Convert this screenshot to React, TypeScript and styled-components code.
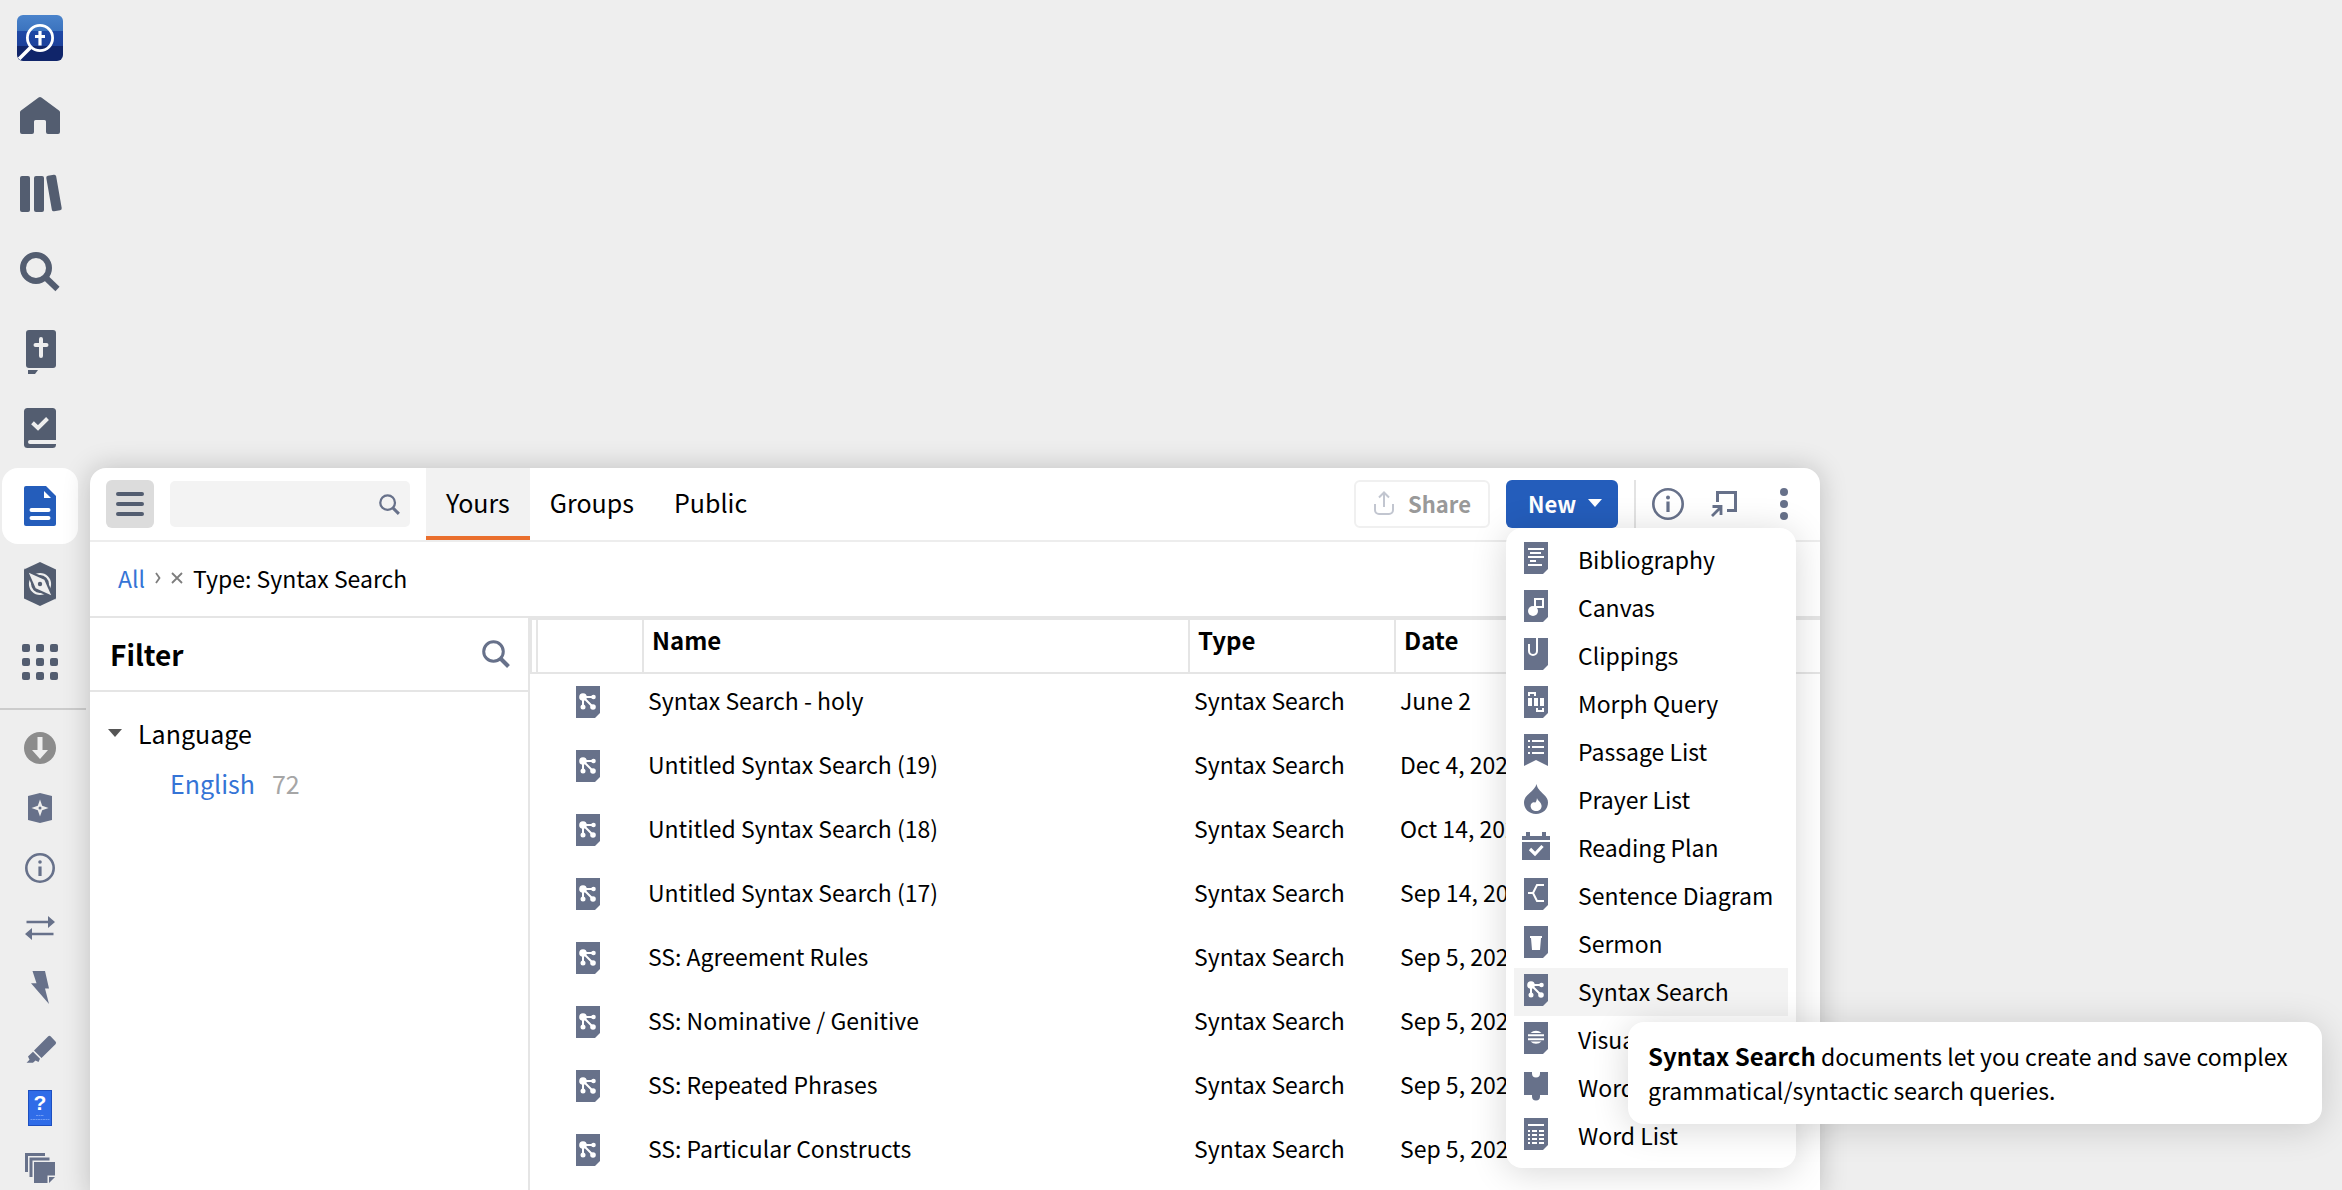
import React from "react";
import styled, { createGlobalStyle } from "styled-components";

const ink = "#535d70";
const slate = "#67718a";
const blue = "#245dbb";

const GlobalStyle = createGlobalStyle`
  *, *::before, *::after { box-sizing: border-box; }
  body {
    margin: 0;
    background: #eeeeee;
    color: #000;
    font-family: "Noto Sans CJK SC", "Noto Sans", sans-serif;
    font-size: 23px;
    line-height: 32px;
  }
  button, input { font: inherit; color: inherit; margin: 0; border: 0; padding: 0; background: none; }
  button { cursor: pointer; }
  a { text-decoration: none; }
  ul { list-style: none; margin: 0; padding: 0; }
  h2 { margin: 0; }
  svg { display: block; flex: none; }
`;

/* ---------- layout ---------- */

const Desktop = styled.div`
  display: grid;
  grid-template-columns: 90px minmax(0, 1730fr) minmax(0, 522fr);
  height: 100vh;
  overflow: hidden;
`;

const Sidebar = styled.nav`
  display: flex;
  flex-direction: column;
  align-items: flex-start;
`;

const AppGroup = styled.div`
  display: flex;
  flex-direction: column;
  gap: 2px;
  padding: 0 2px;
`;

const AppButton = styled.button<{ $active?: boolean }>`
  display: flex;
  align-items: center;
  justify-content: center;
  width: 76px;
  height: 76px;
  border-radius: 16px;
  color: ${(p) => (p.$active ? blue : ink)};
  background: ${(p) => (p.$active ? "#fff" : "transparent")};
`;

const SidebarRule = styled.hr`
  width: 86px;
  height: 2px;
  margin: 8px 0;
  border: 0;
  background: #cccccc;
`;

const ShortcutGroup = styled.div`
  display: flex;
  flex-direction: column;
  padding: 0 2px;
`;

const ShortcutButton = styled.button`
  display: flex;
  align-items: center;
  justify-content: center;
  width: 76px;
  height: 60px;
  color: ${slate};
`;

const Panel = styled.main`
  display: flex;
  flex-direction: column;
  margin-top: 468px;
  min-height: 0;
  background: #fff;
  border-radius: 16px 16px 0 0;
  box-shadow: 0 0 28px rgba(0, 0, 0, 0.2);
`;

const Toolbar = styled.header`
  display: flex;
  align-items: center;
  height: 74px;
  padding-left: 16px;
  padding-right: 20px;
  border-bottom: 2px solid #ededed;
`;

const MenuToggle = styled.button`
  display: flex;
  align-items: center;
  justify-content: center;
  width: 48px;
  height: 48px;
  border-radius: 6px;
  background: #dcdcdc;
  color: ${ink};
`;

const SearchBox = styled.label`
  display: flex;
  align-items: center;
  width: 240px;
  height: 46px;
  margin: 0 16px;
  padding: 0 10px;
  border-radius: 5px;
  background: #f3f3f3;
  color: ${slate};
`;

const SearchInput = styled.input`
  flex: 1;
  min-width: 0;
  outline: none;
`;

const Tabs = styled.div`
  display: flex;
  align-self: stretch;
`;

const Tab = styled.button<{ $active?: boolean }>`
  padding: 0 20px;
  font-size: 25px;
  border-bottom: 4px solid ${(p) => (p.$active ? "#ea6f2d" : "transparent")};
  background: ${(p) => (p.$active ? "#f2f2f2" : "transparent")};
`;

const Actions = styled.div`
  display: flex;
  align-items: center;
  gap: 16px;
  margin-left: auto;
`;

const ShareButton = styled.button`
  display: flex;
  align-items: center;
  gap: 14px;
  width: 136px;
  height: 48px;
  padding: 0 18px 2px;
  border: 2px solid #f0f0f0;
  border-radius: 6px;
  font-size: 22px;
  font-weight: 700;
  color: #999;
`;

const NewWrap = styled.div`
  position: relative;
`;

const NewButton = styled.button`
  display: flex;
  align-items: center;
  gap: 12px;
  width: 112px;
  height: 48px;
  padding: 0 0 2px 22px;
  border-radius: 6px;
  background: ${blue};
  color: #fff;
  font-size: 22px;
  font-weight: 700;
`;

const ActionRule = styled.div`
  width: 2px;
  height: 48px;
  background: #e3e3e3;
`;

const IconButton = styled.button`
  display: flex;
  align-items: center;
  justify-content: center;
  width: 32px;
  height: 48px;
  color: ${slate};
`;

const IconTrio = styled.div`
  display: flex;
  gap: 24px;

  > :last-child { margin-left: 4px; }
`;

const Menu = styled.ul`
  position: absolute;
  z-index: 2;
  top: 100%;
  left: 0;
  width: 290px;
  padding: 8px;
  border-radius: 16px;
  background: #fff;
  box-shadow: 0 4px 36px rgba(0, 0, 0, 0.16);
`;

const MenuRow = styled.li`
  position: relative;
`;

const MenuItem = styled.button<{ $active?: boolean }>`
  display: flex;
  align-items: center;
  gap: 28px;
  width: 100%;
  height: 48px;
  padding: 0 0 2px 8px;
  text-align: left;
  white-space: nowrap;
  background: ${(p) => (p.$active ? "#f3f3f3" : "transparent")};
`;

const MenuGlyph = styled.span`
  padding-bottom: 2px;
  color: ${slate};
`;

const Tooltip = styled.div`
  position: absolute;
  z-index: 3;
  top: 54px;
  left: 114px;
  width: 694px;
  padding: 17px 20px;
  border-radius: 16px;
  background: #fff;
  box-shadow: 0 4px 36px rgba(0, 0, 0, 0.16);
  line-height: 34px;
`;

const TooltipTerm = styled.strong`
  font-size: 24px;
`;

const Breadcrumbs = styled.nav`
  display: flex;
  align-items: center;
  height: 76px;
  padding: 0 28px 2px;
  border-bottom: 2px solid #e5e5e5;
`;

const Link = styled.a`
  color: #3574d6;
`;

const CrumbGlyphs = styled.span`
  display: flex;
  align-items: center;
  gap: 10px;
  margin: 0 10px;
  color: #7d7d7d;
`;

const Body = styled.div`
  display: flex;
  flex: 1;
  min-height: 0;
`;

const FilterPane = styled.aside`
  flex: none;
  width: 440px;
  border-right: 2px solid #e5e5e5;
`;

const FilterHead = styled.div`
  display: flex;
  align-items: center;
  justify-content: space-between;
  height: 74px;
  padding: 0 18px 0 20px;
  border-bottom: 2px solid #e5e5e5;
  color: ${slate};
`;

const FilterTitle = styled.h2`
  font-size: 28px;
  line-height: 40px;
  color: #000;
`;

const FacetGroup = styled.div`
  padding: 16px;
  font-size: 25px;
  line-height: 50px;
`;

const FacetToggle = styled.button`
  display: flex;
  align-items: center;
  gap: 16px;
  padding-left: 2px;
`;

const FacetRow = styled.div`
  display: flex;
  gap: 17px;
  padding-left: 64px;
`;

const Count = styled.span`
  color: #a6a6a6;
`;

const TableWrap = styled.section`
  flex: 1;
  min-width: 0;
  overflow: hidden;
  border-top: 2px solid #e5e5e5;
`;

const Table = styled.table`
  width: 100%;
  table-layout: fixed;
  border-collapse: separate;
  border-spacing: 0;
`;

const HeadCell = styled.th<{ $width?: number }>`
  width: ${(p) => (p.$width ? `${p.$width}px` : "auto")};
  height: 54px;
  padding: 0 8px 12px;
  border-right: 2px solid #e5e5e5;
  border-bottom: 2px solid #e5e5e5;
  font-size: 24px;
  line-height: 32px;
  text-align: left;

  &:first-child { border-left: 2px solid #e5e5e5; padding: 0; }
  &:last-child { border-right: 0; }
`;

const Cell = styled.td`
  height: 64px;
  padding: 0 4px 12px;
  white-space: nowrap;
`;

const IconCell = styled(Cell)`
  padding: 0 0 8px 36px;
  color: ${slate};
`;

/* ---------- sidebar icons (48 x 48) ---------- */

const Glyph = ({ children }: { children: React.ReactNode }) => (
  <svg width="48" height="48" viewBox="0 0 48 48" fill="currentColor" aria-hidden="true">
    {children}
  </svg>
);

const LogoIcon = () => (
  <svg width="46" height="46" viewBox="0 0 46 46" aria-hidden="true">
    <defs>
      <clipPath id="logo-clip"><rect width="46" height="46" rx="6" /></clipPath>
      <linearGradient id="logo-top" x1="0" y1="0" x2="0" y2="1">
        <stop offset="0" stopColor="#4a83cb" /><stop offset="1" stopColor="#3b73be" />
      </linearGradient>
      <linearGradient id="logo-mid" x1="0" y1="0" x2="0" y2="1">
        <stop offset="0" stopColor="#1e48a6" /><stop offset="1" stopColor="#1d419a" />
      </linearGradient>
    </defs>
    <g clipPath="url(#logo-clip)">
      <rect width="46" height="16" fill="url(#logo-top)" />
      <rect y="16" width="46" height="15" fill="url(#logo-mid)" />
      <rect y="31" width="46" height="15" fill="#10256a" />
      <circle cx="23" cy="23" r="12.6" fill="none" stroke="#fff" strokeWidth="2.8" />
      <path d="M13.5 32.5L2 44" stroke="#fff" strokeWidth="3.6" />
      <path d="M23 16v14.5M18 21.5h10" stroke="#fff" strokeWidth="3.2" />
    </g>
  </svg>
);

const HomeIcon = () => (
  <Glyph>
    <path d="M22.6 5.5a2.4 2.4 0 0 1 2.8 0L43 18.4a2.4 2.4 0 0 1 1 2V40a2 2 0 0 1-2 2H32a2 2 0 0 1-2-2V29.500a1.500 1.500 0 0 0-1.500-1.500h-9a1.500 1.500 0 0 0-1.500 1.500V40a2 2 0 0 1-2 2H6a2 2 0 0 1-2-2V20.400a2.400 2.400 0 0 1 1-2z" />
  </Glyph>
);
const LibraryIcon = () => (
  <Glyph>
    <rect x="4" y="6" width="10" height="36" rx="2" />
    <rect x="18" y="6" width="10" height="36" rx="2" />
    <rect x="33" y="5" width="10" height="36" rx="2" transform="rotate(-10 38 23)" />
  </Glyph>
);
const BigSearchIcon = () => (
  <Glyph>
    <circle cx="20" cy="20" r="13" fill="none" stroke="currentColor" strokeWidth="6" />
    <path d="M29 29l12.500 12" stroke="currentColor" strokeWidth="6" />
  </Glyph>
);
const BibleIcon = () => (
  <Glyph>
    <rect x="10" y="4" width="30" height="38" rx="3" />
    <path d="M12 44h10l-3 4h-7z" />
    <path d="M25 13v17M19.500 19h11" stroke="#eee" strokeWidth="4" strokeLinecap="round" />
  </Glyph>
);
const CheckBookIcon = () => (
  <Glyph>
    <rect x="8" y="4" width="32" height="40" rx="3.500" />
    <path d="M41 36H14a2 2 0 0 0 0 4h27z" fill="#eee" />
    <path d="M16.500 18.800l5.500 5.200 9.500-9.500" fill="none" stroke="#eee" strokeWidth="4" />
  </Glyph>
);
const DocumentIcon = () => (
  <Glyph>
    <path d="M10 4h20l10 10v28a2 2 0 0 1-2 2H10a2 2 0 0 1-2-2V6a2 2 0 0 1 2-2z" />
    <path d="M28 9v7h7z" fill="#fff" />
    <path d="M15.500 28h17M15.500 36h17" stroke="#fff" strokeWidth="4" strokeLinecap="round" />
  </Glyph>
);
const CompassIcon = () => (
  <Glyph>
    <path d="M24 2l16 7.500v29L24 46 8 38.500v-29z" />
    <circle cx="24" cy="24" r="10" fill="none" stroke="#eee" strokeWidth="2.200" />
    <path d="M12.800 12.800l15.500 6.900 6.900 15.500-15.500-6.900z" fill="none" stroke={ink} strokeWidth="4.400" />
    <path d="M12.800 12.800l15.500 6.900 6.900 15.500-15.500-6.900z" fill="#eee" />
    <circle cx="24" cy="24" r="2.200" />
  </Glyph>
);
const GridIcon = () => (
  <Glyph>
    {[6, 20, 34].map((y) => [6, 20, 34].map((x) => <rect key={`${x}-${y}`} x={x} y={y} width="8" height="8" rx="2" />))}
  </Glyph>
);
const DownloadIcon = () => (
  <Glyph>
    <circle cx="24" cy="24" r="16" fill="#8c8c8c" />
    <path d="M21.500 13h5v13H32l-8 9-8-9h5.500z" fill="#eee" />
  </Glyph>
);
const ShieldIcon = () => (
  <Glyph>
    <path d="M24 9l12 3v24l-12 3-12-3V12z" />
    <path d="M24 15.500l2.200 6.300 6.300 2.200-6.300 2.200L24 32.500l-2.200-6.300-6.300-2.200 6.300-2.200z" fill="#eee" />
    <circle cx="24" cy="24" r="1.500" />
  </Glyph>
);
const InfoIcon = () => (
  <Glyph>
    <circle cx="24" cy="24" r="13.700" fill="none" stroke="currentColor" strokeWidth="2.600" />
    <circle cx="24" cy="18" r="1.800" />
    <path d="M24 22.500v9.500" stroke="currentColor" strokeWidth="3.200" />
  </Glyph>
);
const SwapIcon = () => (
  <Glyph>
    <path d="M10.500 16.700h21.500V12l7 6-7 6v-4.700H10.500zM37.500 28.700H16V24l-7 6 7 6v-4.700h21.500z" />
  </Glyph>
);
const BoltIcon = () => (
  <Glyph><path d="M16.500 7H29l4 17.500h-4L33 40 15 19.200h5.500z" /></Glyph>
);
const MarkerIcon = () => (
  <Glyph>
    <path d="M32 12.500a2 2 0 0 1 2.800 0l4.700 5a2 2 0 0 1 0 2.700L25.500 34 18 26.500zM17 27.800l7 7-1.500 3.200-3-1.500-2.500 2.300h-6.500l3-3-1.500-3.200z" />
  </Glyph>
);
const HelpIcon = () => (
  <Glyph>
    <rect x="12.500" y="6.500" width="23" height="35" fill="#2f6ce8" stroke="#1d4fc0" />
    <text x="24" y="26" fill="#fff" fontSize="21" fontWeight="700" textAnchor="middle" fontFamily="Liberation Sans">?</text>
    <path d="M20 31.500h8M14.500 35.500h19" stroke="#6f9bf3" strokeWidth="1.200" strokeDasharray="2 .5" />
  </Glyph>
);
const StackIcon = () => (
  <Glyph>
    <path d="M9 9h20v3H12v16H9zM13.500 13.500H33.500v3H16.500V33h-3zM18 18h21v13.500h-7.500V39H18zM33 33h6l-6 6z" />
  </Glyph>
);

/* ---------- small interface icons ---------- */

const Magnifier = ({ size }: { size: number }) => (
  <svg width={size} height={size} viewBox="0 0 28 28" fill="none" stroke="currentColor" aria-hidden="true">
    <circle cx="11.500" cy="11.500" r="9.800" strokeWidth="3" />
    <path d="M18.500 18.500l8 8" strokeWidth="4" />
  </svg>
);
const BarsIcon = () => (
  <svg width="28" height="24" viewBox="0 0 28 24" aria-hidden="true">
    <path d="M2 2h24M2 12h24M2 22h24" stroke="currentColor" strokeWidth="4" strokeLinecap="round" />
  </svg>
);
const UploadIcon = () => (
  <svg width="20" height="24" viewBox="0 0 20 24" fill="none" stroke="#c2c6d0" strokeWidth="2" aria-hidden="true">
    <path d="M1 13v6a4 4 0 0 0 4 4h10a4 4 0 0 0 4-4v-6M10 16V2M5 6.500l5-5 5 5" />
  </svg>
);
const Caret = ({ color }: { color: string }) => (
  <svg width="14" height="8" viewBox="0 0 14 8" aria-hidden="true"><path d="M0 0h14L7 8z" fill={color} /></svg>
);
const CrumbArrow = () => (
  <svg width="6" height="12" viewBox="0 0 6 12" fill="none" stroke="currentColor" strokeWidth="1.800" aria-hidden="true">
    <path d="M1 1l3.500 5L1 11" />
  </svg>
);
const CrumbClose = () => (
  <svg width="12" height="12" viewBox="0 0 12 12" stroke="currentColor" strokeWidth="1.800" aria-hidden="true">
    <path d="M1 1l10 10M11 1L1 11" />
  </svg>
);
const ClearButton = styled.button`
  display: flex;
  align-items: center;
`;
const PopInIcon = () => (
  <svg width="26" height="26" viewBox="0 0 26 26" fill="none" stroke="currentColor" aria-hidden="true">
    <path d="M6.500 11V1.500h18v18H16" strokeWidth="3" />
    <path d="M1 25l8-8M1.500 15.500h8.500v8.500" strokeWidth="2.800" />
  </svg>
);
const ToolbarInfoIcon = () => (
  <svg width="32" height="32" viewBox="0 0 32 32" fill="none" stroke="currentColor" aria-hidden="true">
    <circle cx="16" cy="16" r="14.700" strokeWidth="2.600" />
    <circle cx="16" cy="9.500" r="2" fill="currentColor" stroke="none" />
    <path d="M16 13.500v10.500" strokeWidth="3.200" />
  </svg>
);
const DotsIcon = () => (
  <svg width="8" height="32" viewBox="0 0 8 32" fill="currentColor" aria-hidden="true">
    <circle cx="4" cy="4" r="4" /><circle cx="4" cy="16" r="4" /><circle cx="4" cy="28" r="4" />
  </svg>
);

/* ---------- document type icons (24 x 32 sheet, 2px overhang) ---------- */

const Sheet = ({ children }: { children: React.ReactNode }) => (
  <svg width="28" height="32" viewBox="-2 0 28 32" fill="none" stroke="#fff" strokeWidth="2" aria-hidden="true">
    <path d="M0 0h24v27l-5 5H0z" fill="currentColor" stroke="none" />
    {children}
  </svg>
);
const Shape = ({ children }: { children: React.ReactNode }) => (
  <svg width="28" height="32" viewBox="-2 0 28 32" fill="currentColor" aria-hidden="true">{children}</svg>
);

const BibliographyIcon = () => <Sheet><path d="M4 7h16M6 11h11M4 15h16M6 19h6M4 23h14" /></Sheet>;
const CanvasIcon = () => (
  <Sheet><rect x="11" y="9" width="8" height="8" /><circle cx="9" cy="21" r="5" fill="#fff" stroke="none" /></Sheet>
);
const ClippingsIcon = () => <Sheet><path d="M5 6v7a4 4 0 0 0 8 0V0" /></Sheet>;
const MorphIcon = () => (
  <Sheet>
    <path d="M5 10V7h6v3M13 22v3h6v-3" />
    <path d="M4 12h4v8H4zM10 12h4v8h-4zM16 12h4v8h-4z" fill="#fff" stroke="none" />
  </Sheet>
);
const PassageIcon = () => (
  <Shape>
    <path d="M0 0h24v32l-12-6-12 6z" />
    <path d="M4 7h2M8 7h12M4 13h2M8 13h12M4 19h2M8 19h12" stroke="#fff" strokeWidth="2" />
  </Shape>
);
const FlameIcon = () => (
  <Shape>
    <path d="M12.500 2c1 5 3.500 6.500 7 10.200C22.500 15 24 17 24 20.500 24 27 19 32 12 32S0 27 0 20.500C0 12 11 9.500 12.500 2z" />
    <path d="M13 16c.4 2.600 4.600 4.200 4.600 8 0 3-2.400 5-5.400 5s-5.600-2-5.600-5c0-2.800 2-3.600 3-3.800l1.800.3c.9-1 1.300-2.500 1.600-4.500z" fill="#fff" />
  </Shape>
);
const CalendarIcon = () => (
  <Shape>
    <path d="M-2 6h4V2h4v4h12V2h4v4h4v4H-2zM-2 12h28v18H-2z" />
    <path d="M6 19l5 5 7.500-8" fill="none" stroke="#fff" strokeWidth="3.200" />
  </Shape>
);
const DiagramIcon = () => <Sheet><path d="M4 15h5M20 7h-7L9 15l4 8h7" /></Sheet>;
const SermonIcon = () => (
  <Sheet><path d="M6 10h12v2h-1l-1 12H8L7 12H6z" fill="#fff" stroke="none" /></Sheet>
);
const SyntaxIcon = () => (
  <Sheet>
    <path d="M7 11h10M7 11v10M7 11l10 10" />
    <g fill="#fff" stroke="none">
      <circle cx="7" cy="11" r="3.800" /><circle cx="17.500" cy="11" r="2.300" />
      <circle cx="7" cy="21" r="2.500" /><circle cx="17" cy="21" r="2.800" />
    </g>
  </Sheet>
);
const VisualIcon = () => (
  <Sheet>
    <path d="M6.500 11a8 8 0 0 1 11 0zM6.500 19.500a8 8 0 0 0 11 0z" fill="#fff" stroke="none" />
    <path d="M4 13.300h16M4 17.300h16" strokeWidth="2" />
  </Sheet>
);
const PuzzleIcon = () => (
  <Shape>
    <path d="M0 2h8v1.500a4 4 0 0 0 8 0V2h8v23h-8v1.500a4 4 0 0 1-8 0V25H0z" />
  </Shape>
);
const WordListIcon = () => (
  <Sheet>
    <path d="M4 7h16" />
    <path d="M4 13h2M8 13h5M15 13h5M4 17h2M8 17h5M15 17h5M4 21h2M8 21h5M15 21h5M4 25h2M8 25h5M15 25h5" />
  </Sheet>
);

/* ---------- data ---------- */

const apps = [
  { label: "Logos", Icon: LogoIcon },
  { label: "Home", Icon: HomeIcon },
  { label: "Library", Icon: LibraryIcon },
  { label: "Search", Icon: BigSearchIcon },
  { label: "Bible", Icon: BibleIcon },
  { label: "Courses", Icon: CheckBookIcon },
  { label: "Documents", Icon: DocumentIcon, active: true },
  { label: "Guides", Icon: CompassIcon },
  { label: "Tools", Icon: GridIcon },
];

const shortcuts = [
  { label: "Downloads", Icon: DownloadIcon },
  { label: "Factbook", Icon: ShieldIcon },
  { label: "Information", Icon: InfoIcon },
  { label: "Text comparison", Icon: SwapIcon },
  { label: "Power lookup", Icon: BoltIcon },
  { label: "Highlighting", Icon: MarkerIcon },
  { label: "Help", Icon: HelpIcon },
  { label: "Collections", Icon: StackIcon },
];

const documentTypes = [
  { label: "Bibliography", Icon: BibliographyIcon },
  { label: "Canvas", Icon: CanvasIcon },
  { label: "Clippings", Icon: ClippingsIcon },
  { label: "Morph Query", Icon: MorphIcon },
  { label: "Passage List", Icon: PassageIcon },
  { label: "Prayer List", Icon: FlameIcon },
  { label: "Reading Plan", Icon: CalendarIcon },
  { label: "Sentence Diagram", Icon: DiagramIcon },
  { label: "Sermon", Icon: SermonIcon },
  { label: "Syntax Search", Icon: SyntaxIcon, active: true },
  { label: "Visual Filter", Icon: VisualIcon },
  { label: "Word Find", Icon: PuzzleIcon },
  { label: "Word List", Icon: WordListIcon },
];

const rows = [
  ["Syntax Search - holy", "June 2"],
  ["Untitled Syntax Search (19)", "Dec 4, 2023"],
  ["Untitled Syntax Search (18)", "Oct 14, 2023"],
  ["Untitled Syntax Search (17)", "Sep 14, 2023"],
  ["SS: Agreement Rules", "Sep 5, 2023"],
  ["SS: Nominative / Genitive", "Sep 5, 2023"],
  ["SS: Repeated Phrases", "Sep 5, 2023"],
  ["SS: Particular Constructs", "Sep 5, 2023"],
];

/* ---------- page ---------- */

const NewMenu = () => (
  <NewWrap>
    <NewButton aria-haspopup="menu" aria-expanded="true">
      New <Caret color="#fff" />
    </NewButton>
    <Menu role="menu">
      {documentTypes.map(({ label, Icon, active }) => (
        <MenuRow key={label} role="none">
          <MenuItem role="menuitem" $active={active}>
            <MenuGlyph><Icon /></MenuGlyph>
            {label}
          </MenuItem>
          {active && (
            <Tooltip role="tooltip">
              <TooltipTerm>Syntax Search</TooltipTerm> documents let you create and save complex
              grammatical/syntactic search queries.
            </Tooltip>
          )}
        </MenuRow>
      ))}
    </Menu>
  </NewWrap>
);

export default function App() {
  return (
    <>
      <GlobalStyle />
      <Desktop>
        <Sidebar aria-label="Applications">
          <AppGroup>
            {apps.map(({ label, Icon, active }) => (
              <AppButton key={label} aria-label={label} $active={active}><Icon /></AppButton>
            ))}
          </AppGroup>
          <SidebarRule />
          <ShortcutGroup>
            {shortcuts.map(({ label, Icon }) => (
              <ShortcutButton key={label} aria-label={label}><Icon /></ShortcutButton>
            ))}
          </ShortcutGroup>
        </Sidebar>

        <Panel>
          <Toolbar>
            <MenuToggle aria-label="Toggle sidebar"><BarsIcon /></MenuToggle>
            <SearchBox>
              <SearchInput type="text" aria-label="Find documents" />
              <Magnifier size={21} />
            </SearchBox>
            <Tabs role="tablist">
              <Tab role="tab" aria-selected="true" $active>Yours</Tab>
              <Tab role="tab">Groups</Tab>
              <Tab role="tab">Public</Tab>
            </Tabs>
            <Actions>
              <ShareButton><UploadIcon />Share</ShareButton>
              <NewMenu />
              <ActionRule />
              <IconTrio>
                <IconButton aria-label="Information"><ToolbarInfoIcon /></IconButton>
                <IconButton aria-label="Dock panel"><PopInIcon /></IconButton>
                <IconButton aria-label="More"><DotsIcon /></IconButton>
              </IconTrio>
            </Actions>
          </Toolbar>

          <Breadcrumbs aria-label="Filters">
            <Link href="#all">All</Link>
            <CrumbGlyphs>
              <CrumbArrow />
              <ClearButton aria-label="Remove filter"><CrumbClose /></ClearButton>
            </CrumbGlyphs>
            <span>Type: Syntax Search</span>
          </Breadcrumbs>

          <Body>
            <FilterPane>
              <FilterHead>
                <FilterTitle>Filter</FilterTitle>
                <Magnifier size={28} />
              </FilterHead>
              <FacetGroup>
                <FacetToggle aria-expanded="true"><Caret color="#555" />Language</FacetToggle>
                <FacetRow><Link href="#english">English</Link><Count>72</Count></FacetRow>
              </FacetGroup>
            </FilterPane>

            <TableWrap>
              <Table>
                <thead>
                  <tr>
                    <HeadCell $width={8} />
                    <HeadCell $width={106} />
                    <HeadCell>Name</HeadCell>
                    <HeadCell $width={206}>Type</HeadCell>
                    <HeadCell $width={424}>Date</HeadCell>
                  </tr>
                </thead>
                <tbody>
                  {rows.map(([name, date]) => (
                    <tr key={name}>
                      <td />
                      <IconCell><SyntaxIcon /></IconCell>
                      <Cell>{name}</Cell>
                      <Cell>Syntax Search</Cell>
                      <Cell>{date}</Cell>
                    </tr>
                  ))}
                </tbody>
              </Table>
            </TableWrap>
          </Body>
        </Panel>
      </Desktop>
    </>
  );
}
